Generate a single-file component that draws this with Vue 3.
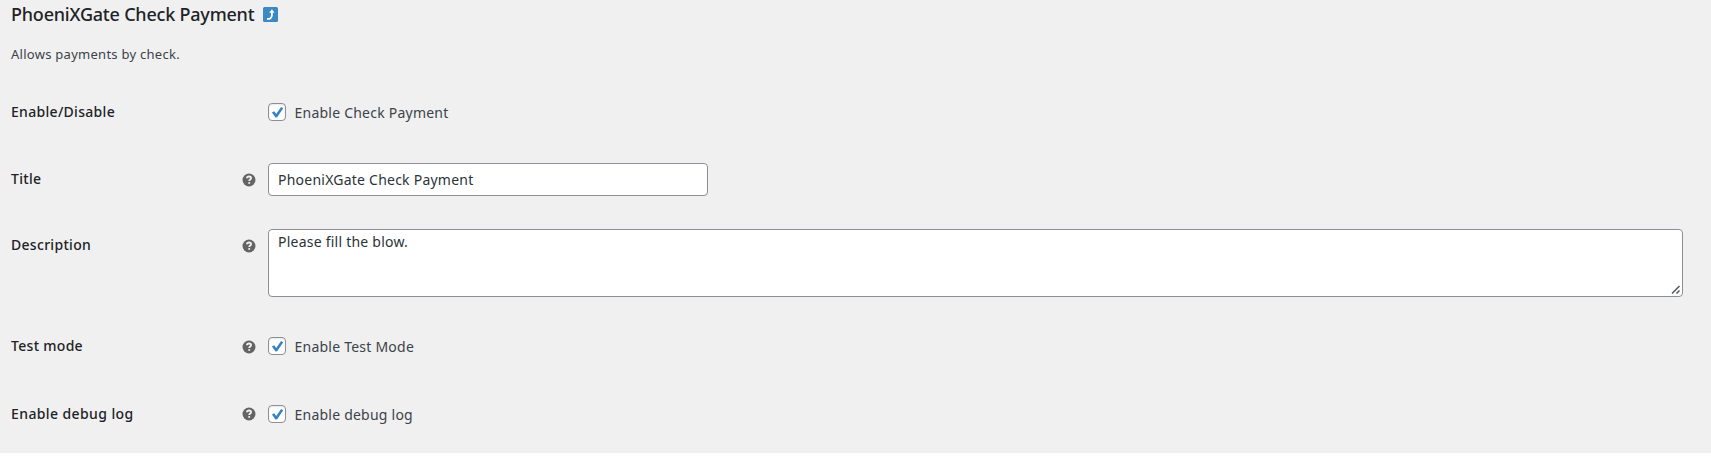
<script setup>
const rows = [
  { label: 'Enable/Disable', kind: 'check', text: 'Enable Check Payment', cls: 'r-enable' },
  { label: 'Title', kind: 'input', text: 'PhoeniXGate Check Payment', tip: true, cls: 'r-title' },
  { label: 'Description', kind: 'area', text: 'Please fill the blow.', tip: true, cls: 'r-desc' },
  { label: 'Test mode', kind: 'check', text: 'Enable Test Mode', tip: true, cls: 'r-test' },
  { label: 'Enable debug log', kind: 'check', text: 'Enable debug log', tip: true, cls: 'r-debug' },
]
</script>

<template>
  <main class="settings">
    <h2 class="heading">
      <span class="heading-text">PhoeniXGate Check Payment</span>
      <svg class="back" viewBox="0 0 15 15">
        <rect width="15" height="15" rx="1.5" fill="#3b88c3" />
        <path d="M4 11.9C7 12.2 8.900 11 8.900 8.100V5.200" fill="none" stroke="#fff" stroke-width="1.800" />
        <path d="M8.900 2.300L11.600 5.700H6.200z" fill="#fff" />
      </svg>
    </h2>
    <p class="intro">Allows payments by check.</p>
    <div v-for="row in rows" :key="row.label" class="row" :class="row.cls">
      <div class="label"><span>{{ row.label }}</span></div>
      <div class="tip">
        <svg v-if="row.tip" viewBox="0 0 14 14">
          <circle cx="7" cy="7" r="6.500" fill="#646464" />
          <path d="M4.900 5.300C5 4 5.900 3.500 7.100 3.500c1.200 0 2 .6 2 1.600 0 1.500-1.900 1.400-1.900 3" fill="none" stroke="#f0f0f0" stroke-width="1.800" />
          <rect x="6.300" y="9.100" width="1.800" height="1.700" fill="#f0f0f0" />
        </svg>
      </div>
      <div class="field">
        <div v-if="row.kind === 'check'" class="check">
          <span class="box">
            <svg viewBox="0 0 18 18"><path d="M3.900 9.500L6.200 8.200L8.200 10.900L13.100 4.100L15.200 5.300L9.200 14.300L7.500 14.600z" fill="#3582c4" /></svg>
          </span>
          <span class="txt">{{ row.text }}</span>
        </div>
        <div v-else-if="row.kind === 'input'" class="input"><span class="txt">{{ row.text }}</span></div>
        <div v-else class="area">
          <span class="txt">{{ row.text }}</span>
          <svg class="grip" viewBox="0 0 10 10"><path d="M1 8.500L8.500 1M5.500 8.500L8.500 5.500" stroke="#50575e" stroke-width="1.500" fill="none" /></svg>
        </div>
      </div>
    </div>
  </main>
</template>

<style>
body { background: #fff; }
</style>

<style scoped>
.settings {
  box-sizing: border-box;
  height: 453px;
  padding-left: 11px;
  background: #f0f0f0;
  color: #3c434a;
  font: 14px/20px "Noto Sans", "Open Sans", sans-serif;
  overflow: hidden;
}
.heading {
  display: flex;
  align-items: center;
  height: 29px;
  margin: 0;
  color: #1d2327;
  font-size: 18px;
  font-weight: 500;
  letter-spacing: -.21px;
  line-height: 29px;
}
.back { width: 15px; height: 15px; margin-left: 9px; }
.intro { height: 38px; margin: 15px 0 0; font-size: 13px; line-height: 20px; letter-spacing: .27px; }
.row { display: flex; align-items: flex-start; }
.label { width: 231px; color: #1d2327; font-weight: 500; padding-top: 1px; letter-spacing: .3px; }
.r-debug .label { letter-spacing: .4px; }
.tip { width: 26px; height: 14px; padding-top: 5px; }
.tip svg { display: block; width: 14px; height: 14px; }
.field { flex: 1; }
.txt { letter-spacing: .23px; }
.check { display: flex; align-items: flex-start; }
.r-enable { height: 62px; padding-top: 19px; }
.r-title { height: 66px; }
.r-desc { height: 106px; }
.r-test { height: 68px; }
.r-title .label, .r-desc .label { padding-top: 6px; }
.r-title .tip, .r-desc .tip { padding-top: 10px; }
.r-debug .tip { padding-top: 4px; }
.box {
  box-sizing: border-box;
  width: 18px;
  height: 18px;
  margin-top: 2px;
  border: 1px solid #8c8f94;
  border-radius: 4px;
  background: #fff;
  box-shadow: inset 0 1px 2px rgba(0, 0, 0, .1);
}
.box svg { display: block; width: 18px; height: 18px; margin: -1px; }
.check .txt { margin: 2px 0 0 8.5px; }
.input, .area {
  box-sizing: border-box;
  border: 1px solid #8c8f94;
  border-radius: 4px;
  background: #fff;
  padding-left: 9px;
  color: #2c3338;
}
.input { width: 440px; height: 33px; padding-top: 6px; }
.area { position: relative; width: 1415px; height: 68px; padding-top: 2px; }
.grip { position: absolute; right: 1px; bottom: 1px; width: 10px; height: 10px; }
</style>
